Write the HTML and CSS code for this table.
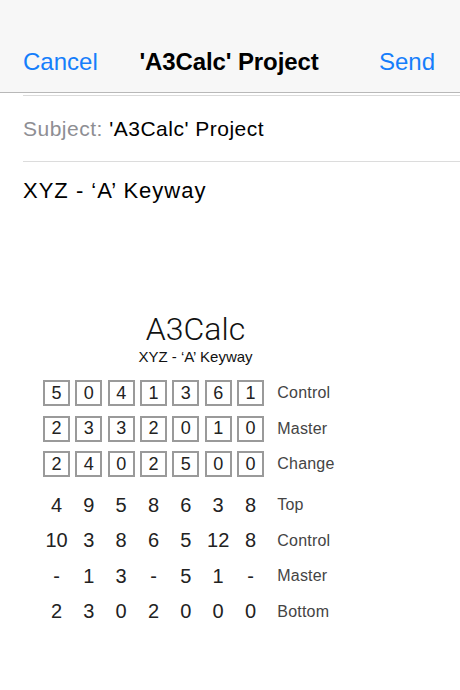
FILE: index.html
```html
<!DOCTYPE html>
<html>
<head>
<meta charset="utf-8">
<link rel="stylesheet" href="styles.css">
</head>
<body>
<div class="header">
  <span class="btn">Cancel</span>
  <span class="title">'A3Calc' Project</span>
  <span class="btn send">Send</span>
</div>
<div class="divider"></div>
<div class="subject"><span class="sublabel">Subject:</span> 'A3Calc' Project</div>
<div class="body-text">XYZ - ‘A’ Keyway</div>
<div class="diagram">
  <div class="dtitle">A3Calc</div>
  <div class="dsub">XYZ - ‘A’ Keyway</div>
  <div class="grid boxes">
    <div class="box">5</div><div class="box">0</div><div class="box">4</div><div class="box">1</div><div class="box">3</div><div class="box">6</div><div class="box">1</div><div class="lbl">Control</div>
    <div class="box">2</div><div class="box">3</div><div class="box">3</div><div class="box">2</div><div class="box">0</div><div class="box">1</div><div class="box">0</div><div class="lbl">Master</div>
    <div class="box">2</div><div class="box">4</div><div class="box">0</div><div class="box">2</div><div class="box">5</div><div class="box">0</div><div class="box">0</div><div class="lbl">Change</div>
  </div>
  <div class="grid nums">
    <div class="num">4</div><div class="num">9</div><div class="num">5</div><div class="num">8</div><div class="num">6</div><div class="num">3</div><div class="num">8</div><div class="lbl">Top</div>
    <div class="num">10</div><div class="num">3</div><div class="num">8</div><div class="num">6</div><div class="num">5</div><div class="num">12</div><div class="num">8</div><div class="lbl">Control</div>
    <div class="num">-</div><div class="num">1</div><div class="num">3</div><div class="num">-</div><div class="num">5</div><div class="num">1</div><div class="num">-</div><div class="lbl">Master</div>
    <div class="num">2</div><div class="num">3</div><div class="num">0</div><div class="num">2</div><div class="num">0</div><div class="num">0</div><div class="num">0</div><div class="lbl">Bottom</div>
  </div>
</div>
</body>
</html>
```

FILE: styles.css
```css
html, body {
  margin: 0;
  padding: 0;
  background: #fff;
  font-family: "Liberation Sans", Arial, sans-serif;
  color: #000;
}
.header {
  height: 93px;
  box-sizing: border-box;
  padding: 31px 25px 0 23px;
  background: #f7f7f7;
  border-bottom: 1px solid #b8b8b8;
  display: grid;
  grid-template-columns: 1fr auto 1fr;
  align-items: center;
}
.btn {
  color: #157efb;
  font-size: 24px;
}
.send {
  justify-self: end;
}
.title {
  font-size: 24px;
  font-weight: bold;
  letter-spacing: -0.1px;
}
.divider {
  margin: 2px 0 0 23px;
  border-top: 1px solid #dadada;
}
.subject {
  margin-left: 23px;
  height: 66px;
  box-sizing: border-box;
  border-bottom: 1px solid #dcdcdc;
  display: flex;
  align-items: center;
  font-size: 21px;
  letter-spacing: 0.5px;
  white-space: pre;
}
.sublabel {
  color: #8e8e93;
}
.body-text {
  margin: 16px 0 0 23px;
  font-size: 22px;
  line-height: 26px;
  letter-spacing: 1px;
}
.diagram {
  margin: 106px 0 0 43px;
  width: 305px;
}
.dtitle {
  text-align: center;
  font-family: Roboto, "Liberation Sans", sans-serif;
  font-weight: 300;
  font-size: 32px;
  line-height: 38px;
  color: #111;
}
.dsub {
  text-align: center;
  font-size: 15px;
  line-height: 18px;
  color: #111;
}
.grid {
  display: grid;
  grid-template-columns: repeat(7, 27px) auto;
  column-gap: 5.33px;
  grid-auto-rows: 26px;
  row-gap: 9.5px;
  align-items: center;
}
.boxes {
  margin-top: 14px;
}
.nums {
  margin-top: 15px;
}
.box {
  box-sizing: border-box;
  height: 26px;
  border: 2px solid #9a9a9a;
  display: flex;
  align-items: center;
  justify-content: center;
  font-size: 18px;
  color: #222;
}
.num {
  text-align: center;
  font-size: 20px;
  color: #222;
  white-space: nowrap;
  justify-self: center;
}
.lbl {
  margin-left: 8px;
  font-size: 16px;
  letter-spacing: 0.2px;
  color: #444;
}
```
